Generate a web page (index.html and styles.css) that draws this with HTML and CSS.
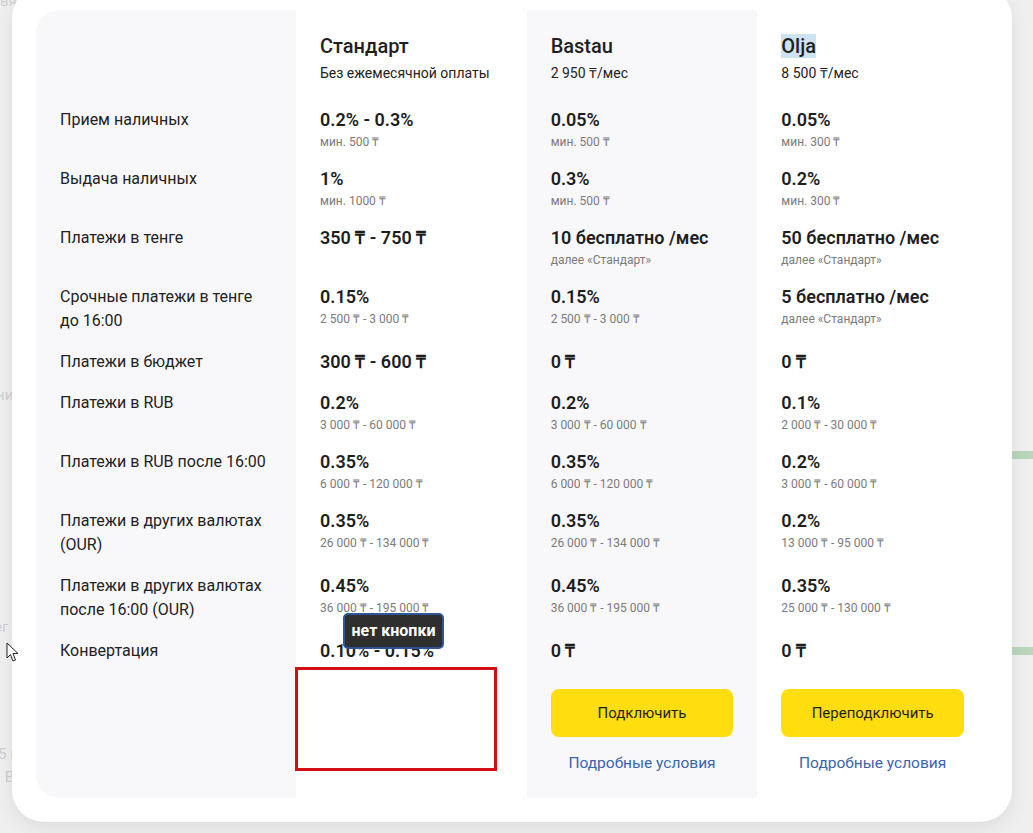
FILE: index.html
```html
<!DOCTYPE html>
<html lang="ru">
<head>
    <meta charset="UTF-8">
    <meta name="viewport" content="width=device-width, initial-scale=1.0">
    <title>Тарифы</title>
    <link rel="stylesheet" href="styles.css">
</head>
<body>
    <div class="backdrop">
        <span class="ghost ghost-top">вяз</span>
        <span class="ghost ghost-1">ни</span>
        <span class="ghost ghost-2">ег</span>
        <span class="ghost ghost-3">5 г</span>
        <span class="ghost ghost-4">• B</span>
        <div class="green-bar bar-1"></div>
        <div class="green-bar bar-2"></div>
    </div>

    <div class="modal">
        <div class="plans">
            <div class="cell c-label head first"></div>
            <div class="cell head">
                <div class="plan-name">Стандарт</div>
                <div class="plan-price">Без ежемесячной оплаты</div>
            </div>
            <div class="cell c-alt head">
                <div class="plan-name">Bastau</div>
                <div class="plan-price">2 950 ₸/мес</div>
            </div>
            <div class="cell head">
                <div class="plan-name"><span class="selected">Olja</span></div>
                <div class="plan-price">8 500 ₸/мес</div>
            </div>

            <div class="cell c-label">Прием наличных</div>
            <div class="cell"><div class="val">0.2% - 0.3%</div><div class="note">мин. 500 ₸</div></div>
            <div class="cell c-alt"><div class="val">0.05%</div><div class="note">мин. 500 ₸</div></div>
            <div class="cell"><div class="val">0.05%</div><div class="note">мин. 300 ₸</div></div>

            <div class="cell c-label">Выдача наличных</div>
            <div class="cell"><div class="val">1%</div><div class="note">мин. 1000 ₸</div></div>
            <div class="cell c-alt"><div class="val">0.3%</div><div class="note">мин. 500 ₸</div></div>
            <div class="cell"><div class="val">0.2%</div><div class="note">мин. 300 ₸</div></div>

            <div class="cell c-label">Платежи в тенге</div>
            <div class="cell"><div class="val">350 ₸ - 750 ₸</div></div>
            <div class="cell c-alt"><div class="val">10 бесплатно /мес</div><div class="note">далее «Стандарт»</div></div>
            <div class="cell"><div class="val">50 бесплатно /мес</div><div class="note">далее «Стандарт»</div></div>

            <div class="cell c-label">Срочные платежи в тенге до 16:00</div>
            <div class="cell"><div class="val">0.15%</div><div class="note">2 500 ₸ - 3 000 ₸</div></div>
            <div class="cell c-alt"><div class="val">0.15%</div><div class="note">2 500 ₸ - 3 000 ₸</div></div>
            <div class="cell"><div class="val">5 бесплатно /мес</div><div class="note">далее «Стандарт»</div></div>

            <div class="cell c-label">Платежи в бюджет</div>
            <div class="cell"><div class="val">300 ₸ - 600 ₸</div></div>
            <div class="cell c-alt"><div class="val">0 ₸</div></div>
            <div class="cell"><div class="val">0 ₸</div></div>

            <div class="cell c-label">Платежи в RUB</div>
            <div class="cell"><div class="val">0.2%</div><div class="note">3 000 ₸ - 60 000 ₸</div></div>
            <div class="cell c-alt"><div class="val">0.2%</div><div class="note">3 000 ₸ - 60 000 ₸</div></div>
            <div class="cell"><div class="val">0.1%</div><div class="note">2 000 ₸ - 30 000 ₸</div></div>

            <div class="cell c-label">Платежи в RUB после 16:00</div>
            <div class="cell"><div class="val">0.35%</div><div class="note">6 000 ₸ - 120 000 ₸</div></div>
            <div class="cell c-alt"><div class="val">0.35%</div><div class="note">6 000 ₸ - 120 000 ₸</div></div>
            <div class="cell"><div class="val">0.2%</div><div class="note">3 000 ₸ - 60 000 ₸</div></div>

            <div class="cell c-label">Платежи в других валютах (OUR)</div>
            <div class="cell"><div class="val">0.35%</div><div class="note">26 000 ₸ - 134 000 ₸</div></div>
            <div class="cell c-alt"><div class="val">0.35%</div><div class="note">26 000 ₸ - 134 000 ₸</div></div>
            <div class="cell"><div class="val">0.2%</div><div class="note">13 000 ₸ - 95 000 ₸</div></div>

            <div class="cell c-label">Платежи в других валютах после 16:00 (OUR)</div>
            <div class="cell"><div class="val">0.45%</div><div class="note">36 000 ₸ - 195 000 ₸</div></div>
            <div class="cell c-alt"><div class="val">0.45%</div><div class="note">36 000 ₸ - 195 000 ₸</div></div>
            <div class="cell"><div class="val">0.35%</div><div class="note">25 000 ₸ - 130 000 ₸</div></div>

            <div class="cell c-label">Конвертация</div>
            <div class="cell"><div class="val">0.10% - 0.15%</div></div>
            <div class="cell c-alt"><div class="val">0 ₸</div></div>
            <div class="cell"><div class="val">0 ₸</div></div>

            <div class="cell c-label foot last"></div>
            <div class="cell foot"></div>
            <div class="cell c-alt foot">
                <button class="btn">Подключить</button>
                <a class="more" href="#">Подробные условия</a>
            </div>
            <div class="cell foot">
                <button class="btn">Переподключить</button>
                <a class="more" href="#">Подробные условия</a>
            </div>
        </div>
    </div>

    <div class="note-tip">нет кнопки</div>
    <div class="note-box"></div>

    <svg class="cursor" width="13" height="21" viewBox="0 0 13 21">
        <path d="M1 1 L1 16 L4.5 12.5 L7 19 L9.5 18 L7 11.5 L12 11.5 Z" fill="#fff" stroke="#222" stroke-width="1" stroke-linejoin="round"/>
    </svg>
</body>
</html>
```

FILE: styles.css
```css
* {
    box-sizing: border-box;
}
body {
    margin: 0;
    height: 833px;
    overflow: hidden;
    background-color: #efefef;
    font-family: Roboto, "Liberation Sans", Arial, sans-serif;
    color: #222;
    position: relative;
}
.backdrop {
    position: absolute;
    inset: 0;
}
.ghost {
    position: absolute;
    left: 0;
    font-size: 15px;
    color: #cfcfcf;
}
.ghost-top { top: -8px; }
.ghost-1 { top: 386px; left: -4px; }
.ghost-2 { top: 618px; left: -6px; }
.ghost-3 { top: 745px; left: -2px; }
.ghost-4 { top: 768px; left: -4px; }
.green-bar {
    position: absolute;
    right: 0;
    width: 21px;
    height: 8px;
    background: #b9d6bb;
}
.bar-1 { top: 451px; }
.bar-2 { top: 647px; }

.modal {
    position: absolute;
    left: 12px;
    top: -14px;
    width: 1000px;
    height: 836px;
    background: #fff;
    border-radius: 32px;
    padding: 24px;
    box-shadow: 0 6px 18px rgba(0, 0, 0, 0.08);
}
.plans {
    display: grid;
    grid-template-columns: 260px repeat(3, 1fr);
}
.cell {
    padding: 0 24px 17px;
    background: #fff;
}
.c-label {
    background: #f8f8fa;
    font-size: 16px;
    line-height: 24px;
    padding-right: 27px;
    color: #222;
}
.c-alt {
    background: #f8f8fa;
}
.head {
    padding-top: 23px;
    padding-bottom: 26px;
}
.first {
    border-top-left-radius: 24px;
}
.last {
    border-bottom-left-radius: 24px;
}
.plan-name {
    font-size: 20px;
    line-height: 26px;
    font-weight: 500;
    color: #1f1f1f;
}
.selected {
    background: #cde3f1;
}
.plan-price {
    margin-top: 5px;
    font-size: 14px;
    line-height: 18px;
}
.val {
    font-size: 18px;
    line-height: 24px;
    font-weight: 600;
    color: #1e1e1e;
}
.note {
    margin-top: 2px;
    font-size: 12px;
    line-height: 16px;
    color: #7b7b7b;
}
.foot {
    padding-top: 9px;
    padding-bottom: 25px;
    display: flex;
    flex-direction: column;
    align-items: stretch;
}
.btn {
    height: 48px;
    border: none;
    border-radius: 8px;
    background: #ffdd0f;
    color: #1e1e1e;
    font-family: inherit;
    font-size: 15px;
    cursor: pointer;
}
.more {
    margin-top: 16px;
    text-align: center;
    font-size: 15.5px;
    line-height: 20px;
    color: #3b64ad;
    text-decoration: none;
}

.note-tip {
    position: absolute;
    left: 343px;
    top: 613px;
    width: 101px;
    height: 36px;
    background: #2f2f2f;
    border: 2px solid #2e5597;
    border-radius: 5px;
    color: #fff;
    font-weight: 700;
    font-size: 16px;
    line-height: 32px;
    text-align: center;
}
.note-box {
    position: absolute;
    left: 295px;
    top: 667px;
    width: 202px;
    height: 104px;
    border: 3px solid #d40f14;
}
.cursor {
    position: absolute;
    left: 6px;
    top: 642px;
}
```
